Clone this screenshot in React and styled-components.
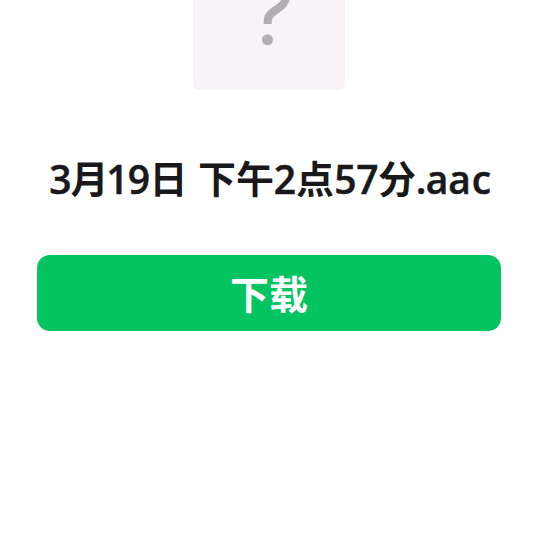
import React from "react"
import styled, { createGlobalStyle } from "styled-components"

const GlobalStyle = createGlobalStyle`
  body {
    margin: 0;
    background: #fff;
    overflow: hidden;
  }
`

const fileName = [
  { text: "3", width: 23 },
  { text: "月", cjk: true, width: 35 },
  { text: "1", width: 21 },
  { text: "9", width: 22 },
  { text: "日", cjk: true, width: 37 },
  { text: " ", width: 11 },
  { text: "下", cjk: true, width: 38 },
  { text: "午", cjk: true, width: 38 },
  { text: "2", width: 22 },
  { text: "点", cjk: true, width: 38 },
  { text: "5", width: 23 },
  { text: "7", width: 21 },
  { text: "分", cjk: true, width: 38 },
  { text: ".", width: 10 },
  { text: "a", width: 22 },
  { text: "a", width: 23 },
  { text: "c", width: 21 },
]

const App = () => (
  <>
    <GlobalStyle />
    <Page>
      <FileCard>
        <svg width="60" height="60" viewBox="0 -10 60 60" aria-hidden="true">
          <path
            d="M27.7 24V21C27.7 9 46 10 46.5 -5"
            fill="none"
            stroke="#b0aeb1"
            strokeWidth="8"
          />
          <circle cx="27.5" cy="39.8" r="5.5" fill="#b0aeb1" />
        </svg>
      </FileCard>
      <FileName>
        {fileName.map(({ text, cjk, width }, i) => (
          <Glyph key={i} $cjk={cjk} $width={width}>
            {text}
          </Glyph>
        ))}
      </FileName>
      <DownloadButton type="button">下载</DownloadButton>
    </Page>
  </>
)

const Page = styled.main`
  height: 539px;
  display: flex;
  flex-direction: column;
  align-items: center;
  box-sizing: border-box;
  padding-right: 1px;
  overflow: hidden;
  font-family: "Noto Sans CJK SC", sans-serif;
`

const FileCard = styled.div`
  flex: none;
  width: 152px;
  height: 90px;
  box-sizing: border-box;
  padding: 0 45px 0 47px;
  background: #f7f3f7;
  border-radius: 0 0 6px 6px;

  svg {
    display: block;
    margin-top: -10px;
  }
`

const FileName = styled.h1`
  display: flex;
  align-items: flex-start;
  height: 60px;
  margin: 58px 0 0;
  padding-left: 3px;
  color: #19191b;
  font-size: 38px;
  white-space: pre;
`

const Glyph = styled.span`
  display: flex;
  justify-content: center;
  width: ${({ $width }) => $width}px;
  font-family: ${({ $cjk }) =>
    $cjk ? `"Noto Sans CJK SC", sans-serif` : `"Open Sans", sans-serif`};
  font-size: ${({ $cjk }) => ($cjk ? 38 : 39)}px;
  line-height: ${({ $cjk }) => ($cjk ? 57 : 62)}px;
  font-weight: ${({ $cjk }) => ($cjk ? 700 : 600)};
  -webkit-text-stroke: ${({ $cjk }) => ($cjk ? 0 : 0.5)}px #19191b;
`

const DownloadButton = styled.button`
  flex: none;
  width: 464px;
  height: 76px;
  margin: 47px 0 0;
  padding: 0 0 3px;
  border: 0;
  border-radius: 13px;
  background: #04c361;
  color: #fff;
  font: 700 39px/60px "Noto Sans CJK SC", sans-serif;
`

export default App
